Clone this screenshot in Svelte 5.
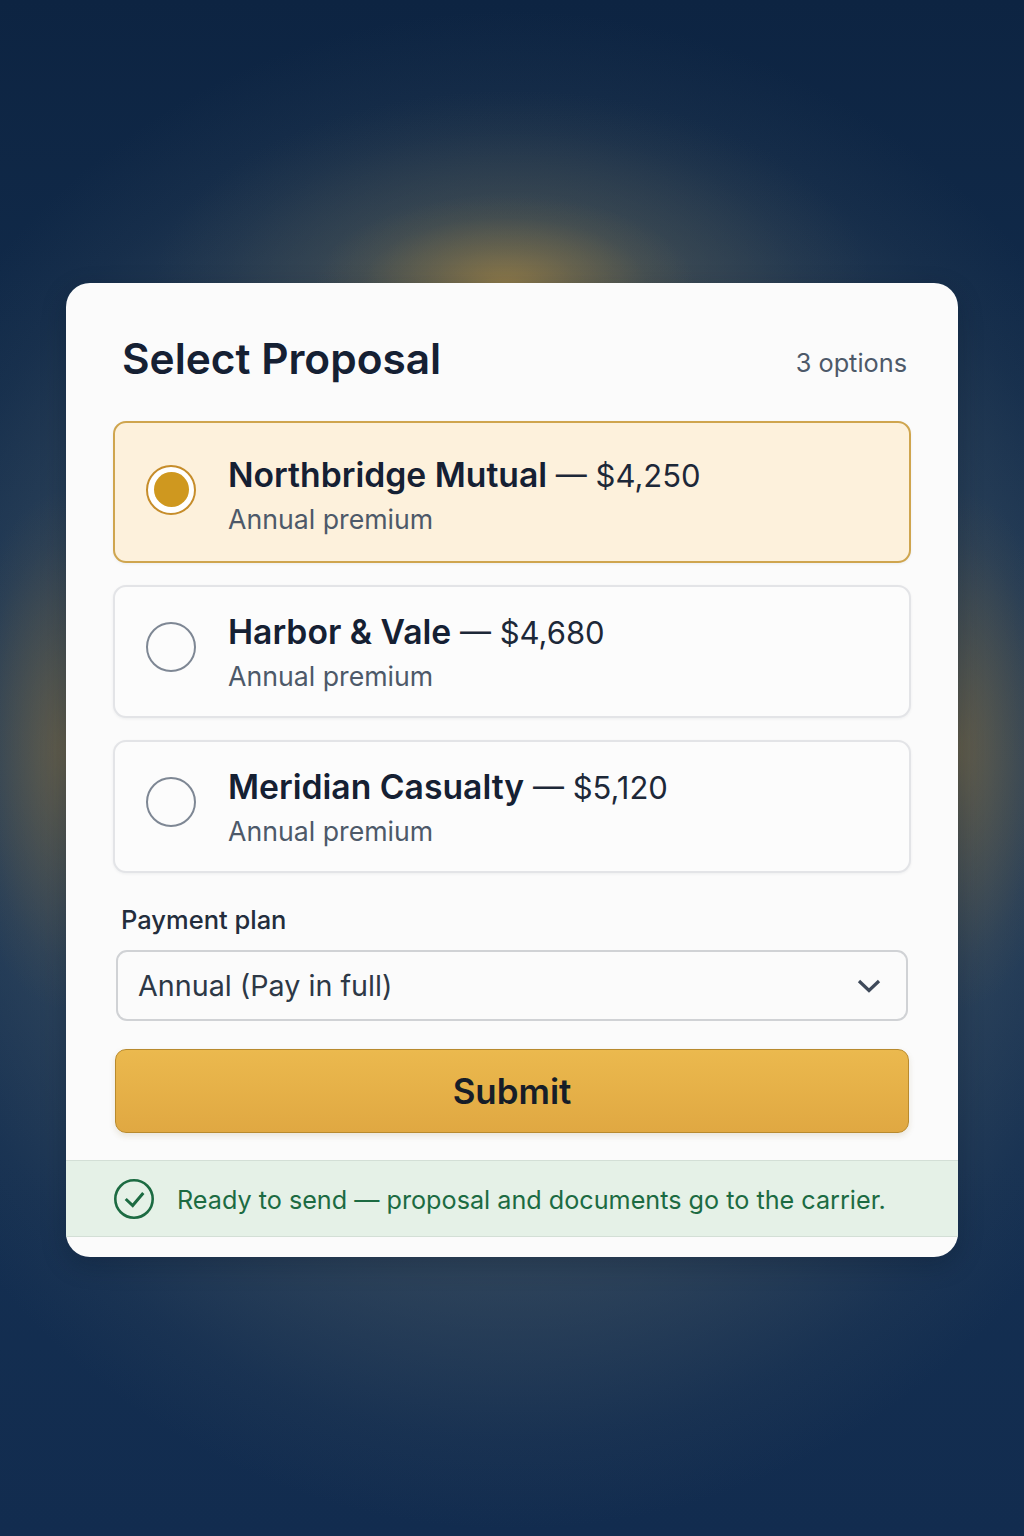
<script lang="ts">
	const proposals = [
		{ id: 'northbridge', carrier: 'Northbridge Mutual', price: '$4,250' },
		{ id: 'harbor', carrier: 'Harbor & Vale', price: '$4,680' },
		{ id: 'meridian', carrier: 'Meridian Casualty', price: '$5,120' }
	];

	let selected = $state('northbridge');
</script>

<main class="page">
	<section class="card">
		<div class="body">
			<header class="head">
				<h1>Select Proposal</h1>
				<span class="count">3 options</span>
			</header>

			<div class="options">
				{#each proposals as p, i}
					<button
						type="button"
						class="option"
						class:active={selected === p.id}
						class:first={i === 0}
						onclick={() => (selected = p.id)}
					>
						<span class="radio"></span>
						<span class="info">
							<span class="line"><strong>{p.carrier}</strong> — {p.price}</span>
							<span class="sub">Annual premium</span>
						</span>
					</button>
				{/each}
			</div>

			<div class="label">Payment plan</div>
			<div class="select">
				<span>Annual (Pay in full)</span>
				<svg width="26" height="26" viewBox="0 0 26 26" fill="none" stroke="#3f4a5a" stroke-width="3.200">
					<path d="M3 8l10 9.500L23 8" />
				</svg>
			</div>

			<button type="button" class="submit">Submit</button>
		</div>

		<div class="status">
			<svg width="40" height="40" viewBox="0 0 40 40" fill="none" stroke="#1c6b42">
				<circle cx="20" cy="20" r="18.700" stroke-width="2.600" />
				<path d="M11.700 20l7 6.500L29.300 14" stroke-width="3" />
			</svg>
			<span>Ready to send — proposal and documents go to the carrier.</span>
		</div>
	</section>
</main>

<style>
	:global(body) {
		margin: 0;
		background: #10294a;
	}

	.page {
		box-sizing: border-box;
		height: 1536px;
		padding: 283px 66px 0;
		font-family: Inter, 'Noto Sans', sans-serif;
		background:
			radial-gradient(ellipse 190px 90px at 505px 285px, rgba(176, 140, 66, 0.66), rgba(176, 140, 66, 0.32) 40%, rgba(176, 140, 66, 0.08) 75%, rgba(176, 140, 66, 0) 100%),
			radial-gradient(ellipse 360px 200px at 512px 290px, rgba(100, 100, 82, 0.55), rgba(100, 100, 82, 0.3) 45%, rgba(100, 100, 82, 0.07) 80%, rgba(100, 100, 82, 0) 100%),
			radial-gradient(ellipse 110px 260px at 66px 750px, rgba(140, 112, 60, 0.55), rgba(140, 112, 60, 0.28) 45%, rgba(140, 112, 60, 0.07) 80%, rgba(140, 112, 60, 0) 100%),
			radial-gradient(ellipse 110px 260px at 958px 750px, rgba(140, 112, 60, 0.55), rgba(140, 112, 60, 0.28) 45%, rgba(140, 112, 60, 0.07) 80%, rgba(140, 112, 60, 0) 100%),
			radial-gradient(ellipse 700px 760px at 512px 770px, rgba(82, 96, 104, 0.85), rgba(82, 96, 104, 0.5) 60%, rgba(82, 96, 104, 0.1) 88%, rgba(82, 96, 104, 0) 100%),
			linear-gradient(180deg, #0d2442 0%, #163253 50%, #122c4f 100%);
	}

	.card {
		box-sizing: border-box;
		display: flex;
		flex-direction: column;
		width: 892px;
		height: 974px;
		padding-bottom: 20px;
		background: #fbfbfb;
		border-radius: 24px;
		box-shadow: 0 8px 24px rgba(8, 20, 40, 0.28);
		overflow: hidden;
	}

	.body {
		flex: 1;
		padding: 0 47px;
	}

	.head {
		display: flex;
		justify-content: space-between;
		align-items: flex-start;
		height: 138px;
		padding: 47px 4px 0 9px;
		box-sizing: border-box;
	}

	h1 {
		margin: 0;
		font-size: 42.400px;
		line-height: 58px;
		font-weight: 600;
		color: #152033;
	}

	.count {
		margin-top: 15px;
		font-size: 25.300px;
		line-height: 36px;
		color: #4d5969;
	}

	.options {
		display: flex;
		flex-direction: column;
		gap: 22px;
	}

	.option {
		display: flex;
		align-items: center;
		gap: 32px;
		width: 100%;
		height: 133px;
		padding: 1px 0 0 31px;
		box-sizing: border-box;
		background: #fcfcfc;
		border: 2px solid #e3e4e7;
		border-radius: 13px;
		box-shadow: 0 1px 3px rgba(20, 30, 50, 0.06);
		font: inherit;
		text-align: left;
		cursor: pointer;
	}

	.option.first {
		height: 142px;
		padding-top: 6px;
	}

	.option.active {
		background: #fdf1dc;
		border-color: #cfa54e;
	}

	.radio {
		box-sizing: border-box;
		flex: none;
		width: 50px;
		height: 50px;
		margin-bottom: 11px;
		border: 2px solid #7e8794;
		border-radius: 50%;
		background: #fcfcfc;
	}

	.active .radio {
		border-color: #c68d2b;
		border-width: 2.500px;
		background: #fff;
		position: relative;
	}

	.active .radio::after {
		content: '';
		position: absolute;
		inset: 5.500px;
		border-radius: 50%;
		background: #cf981f;
	}

	.info {
		display: flex;
		flex-direction: column;
		gap: 4px;
	}

	.line {
		font-size: 31px;
		line-height: 42px;
		color: #1d2838;
	}

	.line strong {
		font-size: 33.700px;
		font-weight: 600;
		color: #152033;
	}

	.sub {
		font-size: 26.700px;
		line-height: 36px;
		color: #4d5969;
	}

	.label {
		margin: 29px 0 12px 8px;
		font-size: 25.500px;
		line-height: 36px;
		font-weight: 500;
		color: #232d3c;
	}

	.select {
		display: flex;
		align-items: center;
		justify-content: space-between;
		box-sizing: border-box;
		height: 71px;
		margin: 0 3px;
		padding: 0 24px 0 20px;
		background: #fbfbfb;
		border: 2px solid #d0d2d5;
		border-radius: 11px;
		font-size: 28.700px;
		color: #2d3846;
	}

	.submit {
		display: block;
		width: 794px;
		height: 84px;
		margin: 28px 0 0 2px;
		background: linear-gradient(180deg, #ebb94e, #e0a842);
		border: 1.500px solid #b88a2e;
		border-radius: 11px;
		box-shadow: 0 3px 6px rgba(120, 90, 30, 0.14);
		font: inherit;
		font-size: 34.900px;
		font-weight: 600;
		color: #161d28;
		cursor: pointer;
	}

	.status {
		display: flex;
		align-items: center;
		gap: 23px;
		box-sizing: border-box;
		height: 77px;
		padding-left: 48px;
		background: #e5f1e7;
		border-top: 1.500px solid #d3dfd6;
		border-bottom: 1.500px solid #d3dfd6;
		font-size: 25.200px;
		color: #1c6b42;
	}

	.status span {
		position: relative;
		top: 1px;
	}
</style>
